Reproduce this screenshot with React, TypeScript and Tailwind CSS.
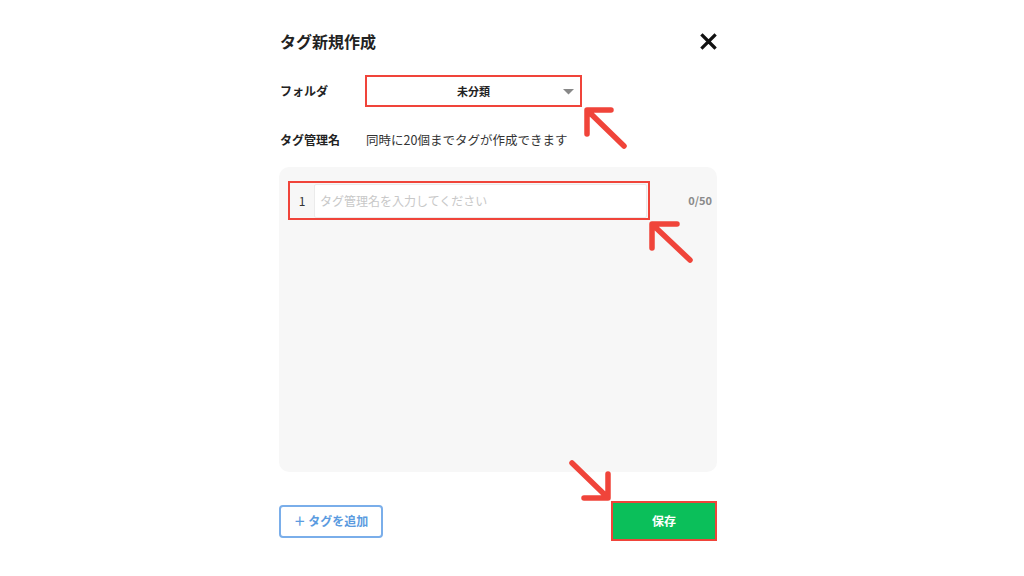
import React from 'react';

const RED = '#f0443a';

function Arrows() {
    // red annotation arrows drawn over the dialog
    return (
        <svg className="pointer-events-none absolute inset-0" width="1024" height="576" viewBox="0 0 1024 576">
            <g stroke={RED} strokeWidth="5.5" strokeLinecap="round" fill="none">
                <path d="M587 110 L611 110 M587 110 L587 134 M589 112 L624 146" />
                <path d="M652 224 L677 224 M652 224 L652 248 M654 226 L690 260" />
                <path d="M608 498 L584 498 M608 498 L608 474 M604 494 L572 463" />
            </g>
        </svg>
    );
}

export default function App() {
    return (
        <div className="relative h-[576px] w-full bg-white font-['Noto_Sans_CJK_JP',sans-serif] text-[#222]">
            <div className="ml-[257px] w-[480px] pl-[22px] pr-[20px] pt-[29px]">
                {/* Header */}
                <div className="flex h-6 items-center justify-between">
                    <h1 className="pl-px text-[16px] font-bold leading-6">タグ新規作成</h1>
                    <svg width="17" height="17" viewBox="0 0 17 17">
                        <path d="M2.5 2.5 L14.5 14.5 M14.5 2.5 L2.5 14.5" stroke="#111" strokeWidth="3.2" strokeLinecap="square" />
                    </svg>
                </div>

                {/* Folder */}
                <div className="mt-[22px] flex items-center">
                    <span className="w-[86px] pl-px text-[12px] font-bold">フォルダ</span>
                    <div className="relative flex h-8 w-[217px] items-center justify-center border-2 border-[#f0443a] bg-white">
                        <span className="text-[11px] font-bold">未分類</span>
                        <svg className="absolute right-[6px] top-[12px]" width="11" height="6" viewBox="0 0 11 6">
                            <path d="M0 0 L11 0 L5.5 5.5 Z" fill="#888" />
                        </svg>
                    </div>
                </div>

                {/* Tag name */}
                <div className="mt-[23px] flex h-5 items-center">
                    <span className="w-[87px] pl-px text-[12px] font-bold">タグ管理名</span>
                    <span className="text-[12.5px] text-[#333]">同時に20個までタグが作成できます</span>
                </div>

                {/* Tag list */}
                <div className="mt-[17px] h-[305px] rounded-[10px] bg-[#f7f7f7] pl-[9px] pr-[5px] pt-[14px]">
                    <div className="flex items-center">
                        <div className="flex h-[39px] w-[362px] items-center border-2 border-[#f0443a]">
                            <span className="w-[24px] text-center text-[12px] text-[#333]">1</span>
                            <div className="mr-px flex h-[34px] flex-1 items-center rounded-[2px] border border-[#ebebeb] bg-white px-[5px]">
                                <span className="text-[12px] text-[#c8c8c8]">タグ管理名を入力してください</span>
                            </div>
                        </div>
                        <span className="ml-auto text-[11px] font-bold text-[#8a8a8a]">0/50</span>
                    </div>
                </div>

                {/* Footer */}
                <div className="mt-[29px] flex items-center justify-between">
                    <button className="flex h-[33px] w-[104px] items-center justify-center rounded-[4px] border-2 border-[#7aaeea] text-[12px] font-bold text-[#5b9be0]">
                        ＋ タグを追加
                    </button>
                    <button className="flex h-[40px] w-[106px] items-center justify-center border-2 border-[#f0443a] bg-[#0bbf5a] text-[12px] font-bold text-white">
                        保存
                    </button>
                </div>
            </div>
            <Arrows />
        </div>
    );
}
